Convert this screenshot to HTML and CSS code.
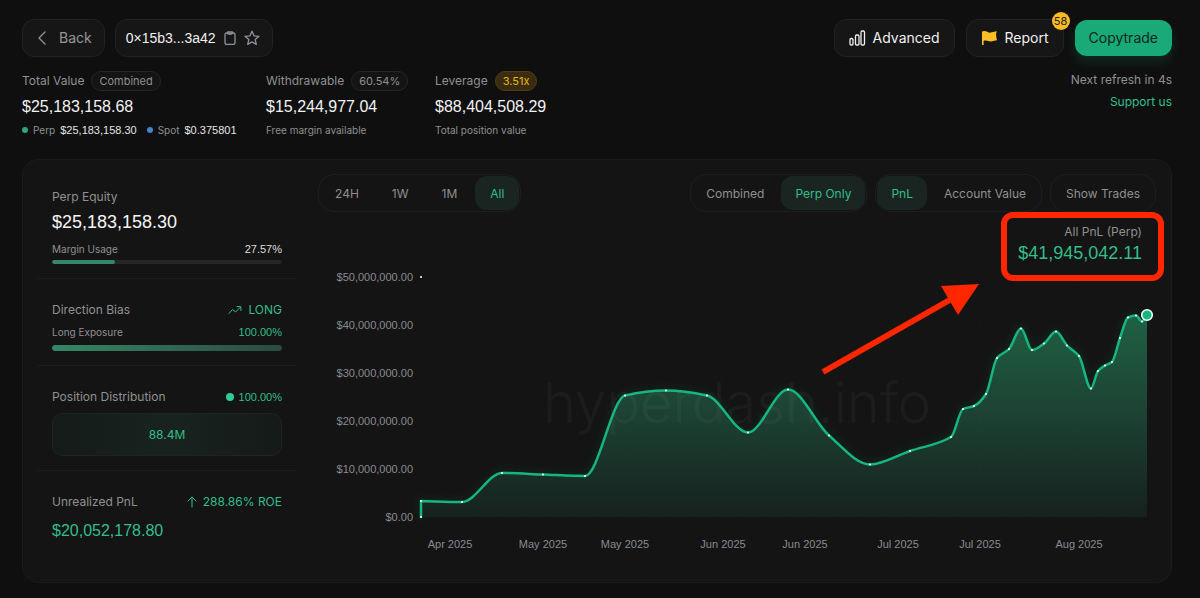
FILE: index.html
```html
<!DOCTYPE html>
<html lang="en">
<head>
    <meta charset="UTF-8">
    <meta name="viewport" content="width=device-width, initial-scale=1.0">
    <title>Trader 0x15b3...3a42</title>
    <link rel="stylesheet" href="styles.css">
</head>
<body>
    <header class="topbar">
        <button class="btn back">
            <svg width="10" height="14" viewBox="0 0 10 14"><path d="M8 1 2 7l6 6"/></svg>
            Back
        </button>
        <div class="btn address">
            <span>0×15b3...3a42</span>
            <button class="icon-button" aria-label="Copy address">
                <svg width="12" height="14" viewBox="0 0 12 14"><rect x="1" y="2" width="10" height="11.4" rx="1.6"/><path d="M3.6 2.2V.8h4.8v1.4c0 .5-.3.8-.8.8H4.4c-.5 0-.8-.3-.8-.8z"/></svg>
            </button>
            <button class="icon-button" aria-label="Add to favourites">
                <svg width="16" height="16" viewBox="0 0 16 16"><path d="m8 1.2 2 4.6 5 .5-3.800 3.300 1.100 4.900L8 11.900 3.700 14.500l1.100-4.900L1 6.300l5-.5z"/></svg>
            </button>
        </div>

        <div class="actions">
            <button class="btn">
                <svg width="17" height="16" viewBox="0 0 17 16"><rect x="1" y="8.500" width="3" height="6.500" rx="1.200"/><rect x="6.500" y="5" width="3.500" height="10" rx="1.200"/><rect x="12" y="1" width="3.500" height="14" rx="1.200"/></svg>
                Advanced
            </button>
            <button class="btn">
                <svg class="flag" width="17" height="16" viewBox="0 0 17 16"><path d="M1 1.500C5-.5 7 3.500 10 2.500c2-.700 4-1 6-1.200-1 2-1 3-.9 4 .1 1.500.4 3.500.9 5-2 .2-3.500.5-5 1-3 .8-5-1.600-8.400-.3V15H1z"/></svg>
                Report
                <span class="badge">58</span>
            </button>
            <button class="btn copytrade">Copytrade</button>
        </div>
    </header>

    <section class="summary">
        <div class="stats">
            <div class="stat">
                <div class="stat-label">Total Value <span class="pill">Combined</span></div>
                <div class="stat-value">$25,183,158.68</div>
                <div class="stat-note">
                    <i class="dot green"></i>Perp <b>$25,183,158.30</b>
                    <i class="dot blue"></i>Spot <b>$0.375801</b>
                </div>
            </div>
            <div class="stat">
                <div class="stat-label">Withdrawable <span class="pill">60.54%</span></div>
                <div class="stat-value">$15,244,977.04</div>
                <div class="stat-note">Free margin available</div>
            </div>
            <div class="stat">
                <div class="stat-label">Leverage <span class="pill amber">3.51x</span></div>
                <div class="stat-value">$88,404,508.29</div>
                <div class="stat-note">Total position value</div>
            </div>
        </div>
        <div class="refresh">
            <div>Next refresh in 4s</div>
            <a href="#">Support us</a>
        </div>
    </section>

    <main class="panel">
        <aside class="sidebar">
            <section class="block">
                <div class="label">Perp Equity</div>
                <div class="equity">$25,183,158.30</div>
                <div class="row small">Margin Usage <span class="white">27.57%</span></div>
                <div class="meter"><div class="meter-fill" style="width: 27.57%"></div></div>
            </section>
            <section class="block">
                <div class="row label">Direction Bias
                    <span class="up"><svg width="14" height="10" viewBox="0 0 14 10"><path d="m1 8.500 3.500-4 3 2.500L12.500 2M9 1.500l3.700.2.300 3.800"/></svg>LONG</span>
                </div>
                <div class="row small exposure">Long Exposure <span class="up">100.00%</span></div>
                <div class="meter thick"><div class="meter-fill" style="width: 100%"></div></div>
            </section>
            <section class="block">
                <div class="row label">Position Distribution
                    <span class="up small"><i class="dot big"></i>100.00%</span>
                </div>
                <div class="distribution">88.4M</div>
            </section>
            <section class="block">
                <div class="row label">Unrealized PnL
                    <span class="up"><svg width="10" height="12" viewBox="0 0 10 12"><path d="M5 11V1M1 5l4-4 4 4"/></svg>288.86% ROE</span>
                </div>
                <div class="unrealized">$20,052,178.80</div>
            </section>
        </aside>

        <section class="chart">
            <div class="toolbar">
                <div class="tabs range">
                    <button>24H</button>
                    <button>1W</button>
                    <button>1M</button>
                    <button class="active">All</button>
                </div>
                <div class="tabs push">
                    <button>Combined</button>
                    <button class="active">Perp Only</button>
                </div>
                <div class="tabs">
                    <button class="active">PnL</button>
                    <button>Account Value</button>
                </div>
                <div class="tabs">
                    <button>Show Trades</button>
                </div>
            </div>

            <svg class="plot" viewBox="318 212 838 356">
                <defs>
                    <linearGradient id="areaFill" gradientUnits="userSpaceOnUse" x1="0" y1="315" x2="0" y2="517">
                        <stop offset="0" stop-color="#1e6144"/>
                        <stop offset="0.45" stop-color="#1d4434"/>
                        <stop offset="1" stop-color="#16211e"/>
                    </linearGradient>
                    <filter id="glow" x="-10%" y="-10%" width="120%" height="130%"><feGaussianBlur stdDeviation="5"/></filter>
                </defs>
                <path class="glow" id="glowLine"/>
                <path class="area" id="area"/>
                <g id="grid"></g>
                <text class="watermark" x="737" y="423">hyperdash.info</text>
                <path class="line" id="line"/>
                <g id="dots"></g>
                <circle class="marker" cx="1147" cy="315" r="5.300"/>
                <g id="labels"></g>
                <path class="arrow-line" d="M823 372 955 297"/>
                <path class="arrow-head" d="m979 284-38 2 17 29z"/>
            </svg>

            <div class="callout">
                <div>All PnL (Perp)</div>
                <strong>$41,945,042.11</strong>
            </div>
        </section>
    </main>

    <script src="chart.js"></script>
</body>
</html>
```
FILE: styles.css
```css
* {
    box-sizing: border-box;
}
body {
    margin: 0;
    padding: 19px 28px 14px 22px;
    background: #0f0f0f;
    color: #909090;
    font-family: Inter, sans-serif;
    font-size: 12px;
    line-height: 16px;
}
button {
    font-family: inherit;
    cursor: pointer;
}
svg {
    fill: none;
    stroke: currentColor;
    stroke-linecap: round;
    stroke-linejoin: round;
}

/* top bar */
.topbar {
    display: flex;
    gap: 10px;
}
.btn {
    position: relative;
    display: flex;
    align-items: center;
    gap: 7px;
    height: 38px;
    padding: 0 14px;
    background: #161616;
    border: 1px solid #222;
    border-radius: 12px;
    color: #f0f0f0;
    font-size: 14px;
    line-height: 16px;
}
.btn svg {
    stroke-width: 1.3;
}
.back {
    gap: 12px;
    color: #969696;
    padding-right: 12px;
}
.address {
    gap: 8px;
    padding: 0 12px 0 10px;
    font-family: "Liberation Sans", Arial, sans-serif;
}
.icon-button {
    display: flex;
    padding: 0;
    background: none;
    border: none;
    color: #8d929c;
}
.actions {
    display: flex;
    gap: 11px;
    margin-left: auto;
}
.btn .flag {
    fill: #fbbf24;
    stroke: none;
}
.badge {
    position: absolute;
    top: -8px;
    right: -7px;
    width: 18px;
    height: 18px;
    border-radius: 50%;
    background: #fbb924;
    color: #222;
    font-size: 11px;
    line-height: 18px;
    text-align: center;
}
.copytrade {
    height: 36px;
    margin-top: 1px;
    background: #19aa78;
    border: none;
    color: #10251d;
    box-shadow: 0 6px 12px rgba(16, 185, 129, 0.16);
}

/* account summary */
.summary {
    display: flex;
    justify-content: space-between;
    margin-top: 14px;
}
.stats {
    display: grid;
    grid-template-columns: 244px 169px auto;
}
.stat-label {
    display: flex;
    align-items: center;
    gap: 7px;
    height: 20px;
}
.pill {
    padding: 0 7px;
    background: #141414;
    border: 1px solid #262626;
    border-radius: 10px;
    font-size: 11px;
    line-height: 18px;
}
.pill.amber {
    background: #3a2c10;
    border-color: #523d12;
    color: #eab813;
}
.stat-value {
    margin-top: 6px;
    color: #f2f2f2;
    font-family: "Liberation Sans", Arial, sans-serif;
    font-size: 16px;
    line-height: 20px;
}
.stat-note {
    display: flex;
    align-items: center;
    margin-top: 5px;
    font-size: 10px;
}
.stat-note b {
    margin: 0 10px 0 5px;
    color: #e4e4e4;
    font-family: "Liberation Sans", Arial, sans-serif;
    font-size: 11px;
    font-weight: normal;
}
.dot {
    width: 6px;
    height: 6px;
    margin-right: 5px;
    border-radius: 50%;
}
.dot.green {
    background: #2aa879;
}
.dot.blue {
    background: #4584cc;
}
.refresh {
    padding-top: 1px;
    text-align: right;
}
.refresh a {
    display: block;
    margin-top: 6px;
    color: #34c08d;
    text-decoration: none;
}

/* main panel */
.panel {
    display: grid;
    grid-template-columns: 260px minmax(0, 1fr);
    gap: 21px;
    margin-top: 21px;
    padding: 14px 15px 14px 14px;
    background: #141414;
    border: 1px solid #1a1a1a;
    border-radius: 16px;
}
.block {
    padding: 23px 15px 14px;
    border-bottom: 1px solid #1d1d1d;
}
.block:first-child {
    padding-top: 15px;
}
.block:last-child {
    border-bottom: none;
}
.row {
    display: flex;
    justify-content: space-between;
}
.small {
    font-size: 10px;
}
.white {
    color: #ddd;
}
.up {
    display: flex;
    align-items: center;
    gap: 6px;
    color: #33bd8a;
}
.small .up,
.small .white,
.up.small {
    font-family: "Liberation Sans", Arial, sans-serif;
    font-size: 11px;
}
.up.small {
    gap: 0;
}
.dot.big {
    width: 8px;
    height: 8px;
    background: #2ecc94;
}
.equity {
    margin: 5px 0 7px;
    color: #f5f5f5;
    font-family: "Liberation Sans", Arial, sans-serif;
    font-size: 18px;
    line-height: 24px;
}
.exposure {
    margin-top: 6px;
}
.meter {
    height: 4px;
    margin-top: 3px;
    background: #262626;
    border-radius: 3px;
    overflow: hidden;
}
.meter.thick {
    height: 6px;
    margin-top: 5px;
}
.meter-fill {
    height: 100%;
    background: #348767;
    border-radius: 3px;
}
.thick .meter-fill {
    background: linear-gradient(90deg, #348767, #2c4a3f);
}
.distribution {
    height: 43px;
    margin-top: 8px;
    background: linear-gradient(90deg, #141b19, #18231f, #151a18);
    border: 1px solid #1d2421;
    border-radius: 10px;
    color: #33bd8a;
    line-height: 41px;
    text-align: center;
}
.unrealized {
    margin-top: 11px;
    color: #33bd8a;
    font-family: "Liberation Sans", Arial, sans-serif;
    font-size: 16px;
    line-height: 20px;
}

/* chart */
.chart {
    position: relative;
}
.toolbar {
    display: flex;
    gap: 8px;
}
.tabs {
    display: flex;
    gap: 3px;
    height: 38px;
    padding: 1px;
    border: 1px solid #1e1e1e;
    border-radius: 16px;
}
.tabs.push {
    margin-left: auto;
}
.tabs button {
    padding: 0 14px;
    background: none;
    border: none;
    border-radius: 12px;
    color: #909090;
    font-size: 12px;
}
.tabs.range button {
    padding: 0 15px;
}
.tabs .active {
    background: #1a2521;
    color: #33bd8a;
}
.plot {
    display: block;
    width: 100%;
    height: auto;
}
.area {
    fill: url(#areaFill);
    stroke: none;
}
.line {
    stroke: #16b680;
    stroke-width: 2.5;
}
.glow {
    stroke: #10b981;
    stroke-width: 5;
    opacity: 0.12;
    filter: url(#glow);
}
.grid-line {
    stroke: #fff;
    stroke-dasharray: 3 3;
    opacity: 0.02;
}
.point {
    fill: #fff;
    stroke: none;
}
.marker {
    fill: #16b680;
    stroke: #fff;
    stroke-width: 1.5;
}
.axis {
    fill: #888b92;
    stroke: none;
    font-family: "Liberation Sans", Arial, sans-serif;
    font-size: 11px;
}
.axis.price {
    text-anchor: end;
}
.axis.date {
    text-anchor: middle;
}
.watermark {
    fill: #fff;
    stroke: none;
    opacity: 0.03;
    font-family: Inter, sans-serif;
    font-size: 56px;
    font-weight: 300;
    text-anchor: middle;
}
.arrow-line {
    stroke: #ff2600;
    stroke-width: 6;
    stroke-linecap: butt;
}
.arrow-head {
    fill: #ff2600;
    stroke: none;
}
.callout {
    position: absolute;
    top: 38px;
    right: -8px;
    padding: 6px 16px 9px 11px;
    border: 6px solid #ff2600;
    border-radius: 12px;
    text-align: right;
}
.callout strong {
    display: block;
    color: #33bd8a;
    font-family: "Liberation Sans", Arial, sans-serif;
    font-size: 18px;
    font-weight: normal;
    line-height: 26px;
}
```
FILE: chart.js
```js
const SVG_NS = 'http://www.w3.org/2000/svg';
const LEFT = 421;
const BASE = 517;

const points = [
    [421, 501], [462, 502], [502, 473], [543, 474.5], [585, 476], [625, 395.5],
    [666, 390.5], [707, 395.5], [748, 432.5], [788, 389.5], [829, 435.5],
    [870, 464.5], [910, 451], [951, 437], [963, 409], [974, 406], [986, 394],
    [997, 358], [1009, 349], [1021, 328.5], [1032, 350], [1044, 343.5],
    [1056, 331.5], [1067, 345.5], [1079, 356], [1091, 388.5], [1098, 371],
    [1105, 365.5], [1112, 362], [1120, 338], [1128, 317.5], [1136, 315.5],
    [1142, 321.5], [1147, 315]
];

const prices = ['$0.00', '$10,000,000.00', '$20,000,000.00', '$30,000,000.00', '$40,000,000.00', '$50,000,000.00'];
const dates = [
    [450, 'Apr 2025'], [543, 'May 2025'], [625, 'May 2025'], [723, 'Jun 2025'],
    [805, 'Jun 2025'], [898, 'Jul 2025'], [980, 'Jul 2025'], [1079, 'Aug 2025']
];

function add(parentId, tag, attrs, text) {
    const el = document.createElementNS(SVG_NS, tag);
    for (const key in attrs) {
        el.setAttribute(key, attrs[key]);
    }
    if (text) {
        el.textContent = text;
    }
    document.getElementById(parentId).appendChild(el);
}

// monotone cubic, so the curve never overshoots a point
function curve(pts) {
    const slopes = [];
    for (let i = 0; i < pts.length - 1; i++) {
        slopes.push((pts[i + 1][1] - pts[i][1]) / (pts[i + 1][0] - pts[i][0]));
    }
    const tangents = pts.map((p, i) => {
        if (i === 0) return slopes[0];
        if (i === pts.length - 1) return slopes[i - 1];
        const a = slopes[i - 1];
        const b = slopes[i];
        return a * b <= 0 ? 0 : 2 * a * b / (a + b);
    });
    let d = '';
    for (let i = 0; i < pts.length - 1; i++) {
        const [x0, y0] = pts[i];
        const [x1, y1] = pts[i + 1];
        const h = (x1 - x0) / 3;
        d += `C${x0 + h},${y0 + h * tangents[i]} ${x1 - h},${y1 - h * tangents[i + 1]} ${x1},${y1}`;
    }
    return d;
}

const path = `M${LEFT},${BASE}L${points[0]}${curve(points)}`;
document.getElementById('line').setAttribute('d', path);
document.getElementById('glowLine').setAttribute('d', path);
document.getElementById('area').setAttribute('d', `${path}V${BASE}Z`);

prices.forEach((price, i) => {
    const y = BASE - i * 48;
    add('grid', 'line', { class: 'grid-line', x1: LEFT, x2: 1147, y1: y, y2: y });
    add('labels', 'text', { class: 'axis price', x: 413, y: y + 4 }, price);
});

dates.forEach(([x, date]) => {
    add('grid', 'line', { class: 'grid-line', x1: x, x2: x, y1: 277, y2: BASE });
    add('labels', 'text', { class: 'axis date', x: x, y: 548 }, date);
});

[[LEFT, 277], [LEFT, BASE], ...points].forEach(([x, y]) => {
    add('dots', 'circle', { class: 'point', cx: x, cy: y, r: 1 });
});
```
